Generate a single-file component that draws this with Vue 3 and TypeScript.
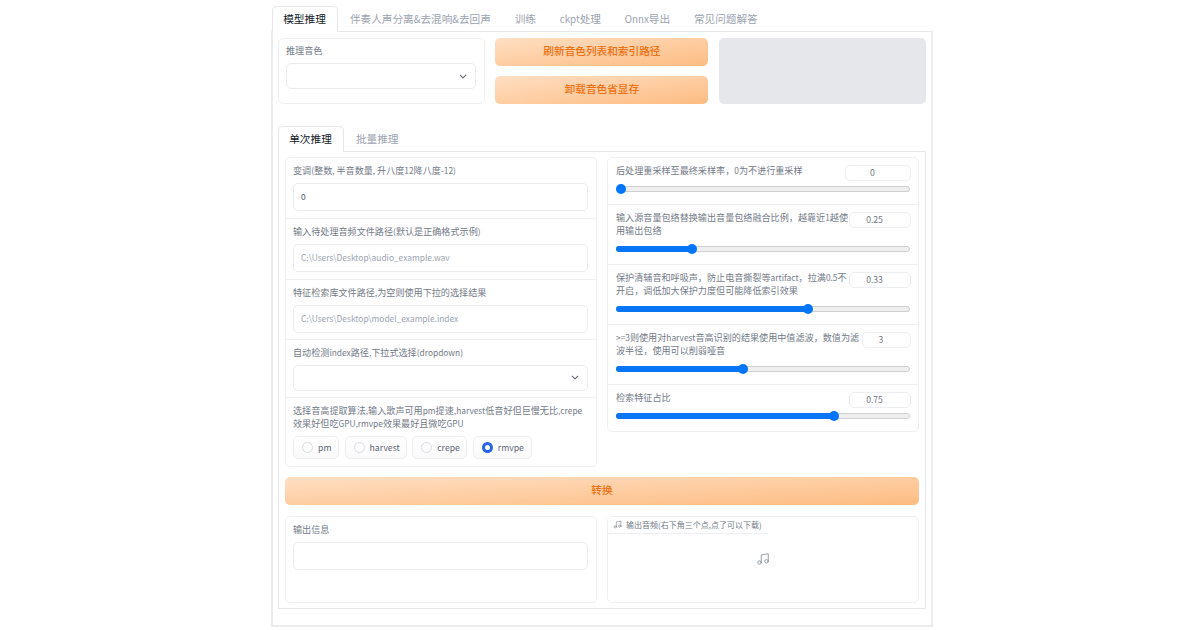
<script setup lang="ts">
import { ref, h, type FunctionalComponent } from 'vue'

interface Field { label: string; value: string; placeholder: string; h: number }
interface Slider { lines: string[]; value: string; percent: number; h: number; box: number }

const tabs = ['模型推理', '伴奏人声分离&去混响&去回声', '训练', 'ckpt处理', 'Onnx导出', '常见问题解答']
const innerTabs = ['单次推理', '批量推理']

// Latin runs are set slightly smaller than the ideographs around them.
const Mixed: FunctionalComponent<{ text: string }> = (props) =>
  h(
    'span',
    props.text
      .split(/([\x20-\x7e]+)/)
      .filter(Boolean)
      .map((run) => (/^[\x20-\x7e]/.test(run) ? h('span', { class: 'latin' }, run) : run)),
  )
Mixed.props = ['text']

const fields: Field[] = [
  { label: '变调(整数, 半音数量, 升八度12降八度-12)', value: '0', placeholder: '', h: 61 },
  { label: '输入待处理音频文件路径(默认是正确格式示例)', value: '', placeholder: 'C:\\Users\\Desktop\\audio_example.wav', h: 61 },
  { label: '特征检索库文件路径,为空则使用下拉的选择结果', value: '', placeholder: 'C:\\Users\\Desktop\\model_example.index', h: 60 },
]

const algoLines = [
  '选择音高提取算法,输入歌声可用pm提速,harvest低音好但巨慢无比,crepe',
  '效果好但吃GPU,rmvpe效果最好且微吃GPU',
]

const sliders: Slider[] = [
  { lines: ['后处理重采样至最终采样率，0为不进行重采样'], value: '0', percent: 0, h: 47, box: 66 },
  { lines: ['输入源音量包络替换输出音量包络融合比例，越靠近1越使', '用输出包络'], value: '0.25', percent: 25, h: 60, box: 62 },
  { lines: ['保护清辅音和呼吸声，防止电音撕裂等artifact，拉满0.5不', '开启，调低加大保护力度但可能降低索引效果'], value: '0.33', percent: 66, h: 60, box: 62 },
  { lines: ['>=3则使用对harvest音高识别的结果使用中值滤波，数值为滤', '波半径，使用可以削弱哑音'], value: '3', percent: 42.86, h: 60, box: 49 },
  { lines: ['检索特征占比'], value: '0.75', percent: 75, h: 46, box: 62 },
]

const algorithms = [
  { name: 'pm', w: 46 },
  { name: 'harvest', w: 62 },
  { name: 'crepe', w: 55 },
  { name: 'rmvpe', w: 59 },
]
const selected = ref('rmvpe')

const thumbOffset = (p: number) => ({ left: `calc((100% - 10px) * ${p / 100})` })
const fillWidth = (p: number) => ({ width: `calc((100% - 10px) * ${p / 100} + 5px)` })
</script>

<template>
  <main class="app">
    <nav class="tabs">
      <button v-for="(t, i) in tabs" :key="t" class="tab" :class="{ active: i === 0 }"><Mixed :text="t" /></button>
    </nav>
    <div class="outer">
      <section class="top">
        <div class="card voice">
          <div class="label">推理音色</div>
          <div class="input select">
            <svg class="chevron" viewBox="0 0 8 5"><path d="M1 .8 4 3.8 7 .8" /></svg>
          </div>
        </div>
        <div class="buttons">
          <button class="primary">刷新音色列表和索引路径</button>
          <button class="primary">卸载音色省显存</button>
        </div>
        <div class="blank"></div>
      </section>

      <nav class="tabs inner-tabs">
        <button v-for="(t, i) in innerTabs" :key="t" class="tab" :class="{ active: i === 0 }">{{ t }}</button>
      </nav>
      <div class="inner">
        <section class="columns">
          <div class="card">
            <div v-for="f in fields" :key="f.label" class="block" :style="{ height: f.h + 'px' }">
              <div class="label"><Mixed :text="f.label" /></div>
              <div class="input" :class="{ hint: !f.value }"><Mixed :text="f.value || f.placeholder" /></div>
            </div>
            <div class="block dropdown">
              <div class="label"><Mixed text="自动检测index路径,下拉式选择(dropdown)" /></div>
              <div class="input select">
                <svg class="chevron" viewBox="0 0 8 5"><path d="M1 .8 4 3.8 7 .8" /></svg>
              </div>
            </div>
            <div class="block algo">
              <div class="label"><div v-for="l in algoLines" :key="l"><Mixed :text="l" /></div></div>
              <div class="radios">
                <div
                  v-for="a in algorithms"
                  :key="a.name"
                  class="radio"
                  :class="{ on: selected === a.name }"
                  :style="{ width: a.w + 'px' }"
                  @click="selected = a.name"
                >
                  <i class="dot"></i><span>{{ a.name }}</span>
                </div>
              </div>
            </div>
          </div>

          <div class="card sliders">
            <div v-for="s in sliders" :key="s.lines[0]" class="block slider" :style="{ height: s.h + 'px' }">
              <div class="head">
                <div class="label"><div v-for="l in s.lines" :key="l"><Mixed :text="l" /></div></div>
                <div class="number" :style="{ width: s.box + 'px' }">{{ s.value }}</div>
              </div>
              <div class="range">
                <div class="track"><div v-if="s.percent" class="fill" :style="fillWidth(s.percent)"></div></div>
                <div class="thumb" :style="thumbOffset(s.percent)"></div>
              </div>
            </div>
          </div>
        </section>

        <button class="primary convert">转换</button>

        <section class="columns results">
          <div class="card">
            <div class="block">
              <div class="label">输出信息</div>
              <div class="input"></div>
            </div>
          </div>
          <div class="card audio">
            <div class="audio-label">
              <svg class="note small" viewBox="0 0 24 24"><path d="M9 18V5l12-2v13" /><circle cx="6" cy="18" r="3" /><circle cx="18" cy="16" r="3" /></svg>
              <span>输出音频(右下角三个点,点了可以下载)</span>
            </div>
            <svg class="note big" viewBox="0 0 24 24"><path d="M9 18V5l12-2v13" /><circle cx="6" cy="18" r="3" /><circle cx="18" cy="16" r="3" /></svg>
          </div>
        </section>
      </div>
    </div>
  </main>
</template>

<style>
body {
  background: #fff;
}
.latin {
  font-size: 0.92em;
}
</style>

<style scoped>
* {
  box-sizing: border-box;
}
.app {
  width: 662px;
  height: 630px;
  margin-left: 271px;
  padding-top: 6px;
  font-family: 'Noto Sans CJK SC', sans-serif;
  color: #737a86;
}
button {
  font: inherit;
  border: 0;
  padding: 0;
  background: none;
}
.tabs {
  display: flex;
  height: 26px;
  margin-bottom: -1px;
  padding-left: 1px;
}
.tab {
  height: 25px;
  padding: 0 10.9px 1px;
  border: 1px solid transparent;
  border-bottom: 0;
  font-size: 10.65px;
  line-height: 22px;
  color: #9ca3af;
  white-space: nowrap;
}
.tab.active {
  position: relative;
  height: 26px;
  width: 66px;
  padding: 0 11px 2px 10px;
  border-color: #e5e7eb;
  border-radius: 5px 5px 0 0;
  background: #fff;
  color: #111827;
}
.outer {
  height: 596px;
  border: 2px solid #ececee;
  border-top: 1px solid #e5e7eb;
  padding: 6px 5px 0;
}
.top {
  display: grid;
  grid-template-columns: 207px 213px 207px;
  gap: 10.4px;
  height: 66px;
}
.card {
  border: 1px solid #eff0f2;
  border-radius: 5px;
  background: #fff;
}
.label {
  height: 13.3px;
  font-size: 9.1px;
  line-height: 13.3px;
  white-space: nowrap;
}
.voice {
  padding: 5px 8px 0 7px;
}
.input {
  display: flex;
  align-items: center;
  width: 295px;
  height: 28px;
  margin-top: 6px;
  padding: 0 0 1px 7px;
  border: 1px solid #eaecef;
  border-radius: 5px;
  font-size: 9.1px;
  color: #4b5563;
}
.input.hint {
  color: #9ca3af;
}
.select {
  justify-content: flex-end;
  height: 26px;
  padding: 0 8px 0 0;
}
.voice .select {
  width: 190px;
}
.chevron {
  width: 8px;
  height: 5px;
  fill: none;
  stroke: #6b7280;
  stroke-width: 1.2;
}
.buttons {
  display: flex;
  flex-direction: column;
  justify-content: space-between;
}
.primary {
  height: 28px;
  padding-bottom: 2px;
  border-radius: 5px;
  background: linear-gradient(to bottom right, #ffdfc3, #fdbc82);
  color: #ee7010;
  font-size: 10.65px;
  line-height: 26px;
  font-weight: 500;
}
.blank {
  border-radius: 5px;
  background: #e5e7eb;
}
.inner-tabs {
  margin-top: 22px;
  padding-left: 0;
}
.inner {
  height: 458px;
  border: 1px solid #e5e7eb;
  padding: 5px 6px 0;
}
.columns {
  display: grid;
  grid-template-columns: 312px 312px;
  gap: 10px;
  align-items: start;
}
.block {
  padding: 5.5px 8px 0 7px;
  border-bottom: 1px solid #eff0f2;
}
.block:last-child {
  border-bottom: 0;
}
.dropdown {
  height: 58px;
}
.algo {
  height: 68px;
}
.algo .label {
  height: 26.6px;
}
.radios {
  display: flex;
  gap: 5.6px;
  margin-top: 6px;
}
.radio {
  display: flex;
  align-items: center;
  height: 23px;
  padding-left: 8px;
  border: 1px solid #eceef1;
  border-radius: 5px;
  background: linear-gradient(#fff, #fafafb);
  color: #5f6673;
  font-size: 8.7px;
}
.dot {
  flex: none;
  width: 11px;
  height: 11px;
  margin-right: 5px;
  border: 1px solid #d9dce1;
  border-radius: 50%;
}
.on .dot {
  border: 3.5px solid #2563eb;
}
.slider {
  display: flex;
  flex-direction: column;
  padding-left: 8px;
}
.head {
  display: flex;
  justify-content: space-between;
}
.head .label {
  width: 0;
}
.number {
  height: 16px;
  margin: 1px -1px 0 0;
  padding-right: 11px;
  border: 1px solid #eceef1;
  border-radius: 5px;
  background: #fff;
  font-size: 8.6px;
  line-height: 13px;
  text-align: center;
}
.range {
  position: relative;
  height: 10px;
  margin: auto 0 10px;
}
.track {
  height: 6px;
  margin-top: 2px;
  border: 1px solid #cfcfcf;
  border-radius: 3px;
  background: #efefef;
}
.fill {
  height: 6px;
  margin: -1px;
  border-radius: 3px 0 0 3px;
  background: #0875f5;
}
.thumb {
  position: absolute;
  top: 0;
  width: 10px;
  height: 10px;
  border-radius: 50%;
  background: #0075ff;
}
.convert {
  display: block;
  width: 634px;
  margin-top: 10px;
}
.results {
  margin-top: 11px;
}
.results .card {
  height: 87px;
}
.audio-label {
  display: flex;
  align-items: center;
  width: 160px;
  height: 17px;
  padding: 0 0 2px 5px;
  border-bottom: 1px solid #eceef1;
  font-size: 8px;
  white-space: nowrap;
}
.note {
  fill: none;
  stroke: currentColor;
  stroke-width: 1.5;
  stroke-linecap: round;
  stroke-linejoin: round;
}
.small {
  width: 9px;
  height: 9px;
  margin-right: 4px;
}
.big {
  display: block;
  width: 14px;
  height: 14px;
  margin: 18px auto 0;
  color: #8b919b;
}
</style>
